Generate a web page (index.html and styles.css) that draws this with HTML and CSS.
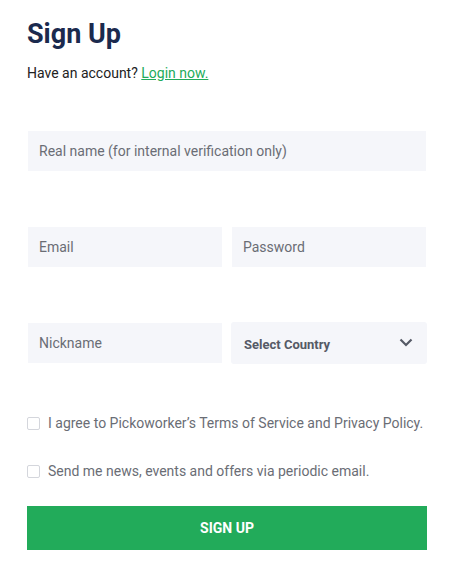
FILE: index.html
```html
<!DOCTYPE html>
<html>
<head>
<meta charset="utf-8">
<link rel="stylesheet" href="styles.css">
</head>
<body>
<form class="signup">
  <h1 class="title">Sign Up</h1>
  <p class="subtitle">Have an account? <a href="#" class="login">Login now.</a></p>
  <div class="row row-first">
    <div class="field">Real name (for internal verification only)</div>
  </div>
  <div class="row two">
    <div class="field">Email</div>
    <div class="field">Password</div>
  </div>
  <div class="row two">
    <div class="field">Nickname</div>
    <div class="select">
      <span>Select Country</span>
      <svg class="chev" width="14" height="9" viewBox="0 0 14 9"><path d="M1.5 1.5 L7 7 L12.5 1.5" fill="none" stroke="#555a66" stroke-width="2.2"/></svg>
    </div>
  </div>
  <label class="check check-first"><span class="box"></span>I agree to Pickoworker’s Terms of Service and Privacy Policy.</label>
  <label class="check"><span class="box"></span>Send me news, events and offers via periodic email.</label>
  <button type="button" class="btn">SIGN UP</button>
</form>
</body>
</html>
```
FILE: styles.css
```css
html, body { margin: 0; padding: 0; background: #fff; }
*, *::before, *::after { box-sizing: border-box; }
body { font-family: Roboto, "Liberation Sans", sans-serif; }
.signup {
  width: 400px;
  margin-left: 27px;
  padding-top: 17px;
  display: flex;
  flex-direction: column;
}
.title {
  margin: 0;
  font-size: 27px;
  line-height: 34px;
  font-weight: 700;
  color: #1b2a4e;
}
.subtitle {
  margin: 13px 0 0;
  font-size: 14px;
  line-height: 18px;
  color: #222;
}
.login { color: #22ab5a; text-decoration: underline; }
.row { display: grid; grid-template-columns: 1fr; margin-top: 56px; }
.row.two { grid-template-columns: 1fr 1fr; column-gap: 8px; }
.row-first { margin-top: 49px; }
.field {
  height: 40px;
  margin: 0 1px;
  background: #f5f6fa;
  color: #6a6d75;
  font-size: 14px;
  line-height: 40px;
  padding-left: 11px;
}
.select {
  height: 42px;
  margin-top: -1px;
  background: #f5f6fa;
  border-radius: 3px;
  display: flex;
  align-items: center;
  justify-content: space-between;
  padding: 0 14px 0 13px;
  font-size: 13px;
  font-weight: 700;
  color: #555a66;
}
.select span { padding-top: 3px; }
.chev { margin-top: -2px; }
.check {
  display: flex;
  align-items: center;
  font-size: 14px;
  color: #6a6d75;
  height: 20px;
}
.check-first { margin-top: 49px; }
.check + .check { margin-top: 28px; }
.box {
  width: 13px;
  height: 13px;
  border: 1px solid #d4d6dc;
  border-radius: 2px;
  margin-right: 8px;
  flex: none;
}
.btn {
  margin-top: 25px;
  height: 44px;
  border: none;
  background: #22ab5a;
  color: #fff;
  font-family: Roboto, "Liberation Sans", sans-serif;
  font-weight: 700;
  font-size: 14px;
  cursor: pointer;
}
```
